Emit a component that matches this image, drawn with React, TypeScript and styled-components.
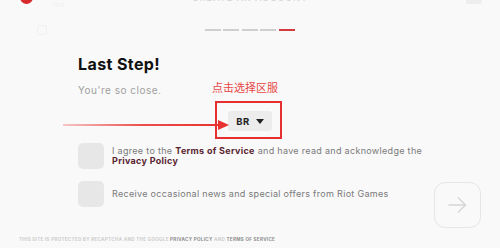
import React from 'react'
import styled, { createGlobalStyle } from 'styled-components'

const GlobalStyle = createGlobalStyle`
  html, body {
    margin: 0;
    padding: 0;
    background: #f9f9f9;
  }
  body {
    font-family: Inter, "Noto Sans", sans-serif;
  }
`

const STEPS = 5
const CURRENT_STEP = 4

export default function App() {
  return (
    <>
      <GlobalStyle />
      <Page>
        <Header>
          <Brand>
            <Logo />
            <BrandMeta>
              <FaintText>riot</FaintText>
              <FaintIcon />
            </BrandMeta>
          </Brand>
          <StepInfo>
            <StepTitle>CREATE AN ACCOUNT</StepTitle>
            <Progress>
              {Array.from({ length: STEPS }).map((_, i) => (
                <Dash key={i} active={i === CURRENT_STEP} />
              ))}
            </Progress>
          </StepInfo>
          <HeaderRight>
            <CloseStub />
          </HeaderRight>
        </Header>

        <Body>
          <Form>
            <Title>Last Step!</Title>
            <Subtitle>You're so close.</Subtitle>

            <RegionRow>
              <RegionSelect>
                <RegionLabel>BR</RegionLabel>
                <Caret />
                <AnnotationLabel>点击选择区服</AnnotationLabel>
                <AnnotationBox />
                <AnnotationArrow viewBox="0 0 166 12" preserveAspectRatio="none">
                  <defs>
                    <linearGradient id="arrowFade" x1="0" x2="1" y1="0" y2="0">
                      <stop offset="0" stopColor="#e8322f" stopOpacity="0.25" />
                      <stop offset="0.5" stopColor="#e8322f" stopOpacity="0.85" />
                      <stop offset="1" stopColor="#e8322f" stopOpacity="1" />
                    </linearGradient>
                  </defs>
                  <rect x="0" y="5" width="156" height="2" fill="url(#arrowFade)" />
                  <polygon points="155,1 166,6 155,11" fill="#e8322f" />
                </AnnotationArrow>
              </RegionSelect>
            </RegionRow>

            <CheckRow>
              <Checkbox />
              <CheckText>
                I agree to the <LinkText>Terms of Service</LinkText> and have read and acknowledge the
                <br />
                <LinkText>Privacy Policy</LinkText>
              </CheckText>
            </CheckRow>

            <CheckRow>
              <Checkbox />
              <CheckText>Receive occasional news and special offers from Riot Games</CheckText>
            </CheckRow>
          </Form>

          <Actions>
            <NextButton aria-label="Next">
              <svg width="19" height="16" viewBox="0 0 19 16" fill="none">
                <path d="M1 8h16.5" stroke="#d6d6d6" strokeWidth="1.5" strokeLinecap="round" />
                <path d="M10.5 1l7 7-7 7" stroke="#d6d6d6" strokeWidth="1.5" strokeLinecap="round" strokeLinejoin="round" />
              </svg>
            </NextButton>
          </Actions>
        </Body>

        <Footer>
          THIS SITE IS PROTECTED BY RECAPTCHA AND THE GOOGLE <FooterLink>PRIVACY POLICY</FooterLink> AND{' '}
          <FooterLink>TERMS OF SERVICE</FooterLink>
        </Footer>
      </Page>
    </>
  )
}

const Page = styled.div`
  width: 500px;
  height: 248px;
  overflow: hidden;
  background: #f9f9f9;
  display: flex;
  flex-direction: column;
`

const Header = styled.div`
  height: 44px;
  display: grid;
  grid-template-columns: 1fr auto 1fr;
`

const Brand = styled.div`
  display: flex;
  align-items: flex-start;
  padding-left: 20px;
`

const Logo = styled.div`
  width: 13px;
  height: 13px;
  margin-top: -9px;
  border-radius: 50%;
  background: #d8292b;
`

const BrandMeta = styled.div`
  display: flex;
  flex-direction: column;
  margin-left: 4px;
`

const FaintText = styled.span`
  margin-left: 16px;
  margin-top: 1px;
  font-size: 7px;
  line-height: 8px;
  color: #efefef;
`

const FaintIcon = styled.div`
  width: 8px;
  height: 8px;
  margin-top: 16px;
  border: 1px solid #f0f0f0;
  border-radius: 2px;
`

const StepInfo = styled.div`
  display: flex;
  flex-direction: column;
  align-items: center;
`

const StepTitle = styled.div`
  margin-top: -7.5px;
  font-size: 9px;
  line-height: 9px;
  letter-spacing: 1px;
  font-weight: 600;
  color: #d8d8d8;
  white-space: nowrap;
`

const Progress = styled.div`
  display: flex;
  gap: 2.5px;
  margin-top: 27.5px;
`

const Dash = styled.div<{ active: boolean }>`
  width: 16px;
  height: 2px;
  background: ${p => (p.active ? '#d33a3c' : '#cfcfcf')};
`

const HeaderRight = styled.div`
  display: flex;
  justify-content: flex-end;
  padding-right: 18px;
`

const CloseStub = styled.div`
  width: 16px;
  height: 4px;
  background: #eeeeee;
  border-radius: 0 0 2px 2px;
`

const Body = styled.div`
  height: 184px;
  display: flex;
  justify-content: space-between;
`

const Form = styled.div`
  display: flex;
  flex-direction: column;
  padding-left: 78px;
`

const Title = styled.h1`
  margin: 10px 0 0;
  font-size: 16px;
  line-height: 20px;
  font-weight: 700;
  letter-spacing: 0.4px;
  color: #111111;
`

const Subtitle = styled.p`
  margin: 9px 0 0;
  font-size: 10px;
  line-height: 14px;
  letter-spacing: 0.5px;
  color: #a0a0a0;
`

const RegionRow = styled.div`
  display: flex;
  padding-left: 150px;
  margin-top: 14px;
`

const RegionSelect = styled.div`
  position: relative;
  width: 44px;
  height: 20px;
  display: flex;
  align-items: center;
  justify-content: center;
  gap: 6px;
  background: #ececec;
  border-radius: 3px;
`

const RegionLabel = styled.span`
  font-size: 9.5px;
  font-weight: 700;
  color: #222222;
  letter-spacing: 0.4px;
`

const Caret = styled.span`
  width: 0;
  height: 0;
  border-left: 4.5px solid transparent;
  border-right: 4.5px solid transparent;
  border-top: 5px solid #222222;
`

const AnnotationLabel = styled.span`
  position: absolute;
  left: -16px;
  top: -30px;
  font-family: "Noto Sans CJK SC", sans-serif;
  font-size: 11px;
  line-height: 13px;
  color: #e64745;
  white-space: nowrap;
`

const AnnotationBox = styled.div`
  position: absolute;
  left: -13px;
  top: -10px;
  width: 67px;
  height: 38px;
  box-sizing: border-box;
  border: 2px solid #e5302f;
`

const AnnotationArrow = styled.svg`
  position: absolute;
  left: -165px;
  top: 8px;
  width: 166px;
  height: 12px;
`

const CheckRow = styled.div`
  display: flex;
  align-items: center;
  margin-top: 12px;
`

const Checkbox = styled.div`
  flex: none;
  width: 26px;
  height: 26px;
  border-radius: 5px;
  background: #e7e7e7;
`

const CheckText = styled.div`
  margin-left: 8px;
  font-size: 9px;
  line-height: 10.5px;
  letter-spacing: 0.31px;
  color: #7a7a7a;
  white-space: nowrap;
`

const LinkText = styled.span`
  font-weight: 700;
  color: #5a2531;
`

const Actions = styled.div`
  display: flex;
  align-items: flex-end;
  padding-right: 19px;
`

const NextButton = styled.button`
  width: 47px;
  height: 46px;
  padding: 0;
  display: flex;
  align-items: center;
  justify-content: center;
  background: transparent;
  border: 1.5px solid #e6e6e6;
  border-radius: 11px;
  cursor: pointer;
`

const Footer = styled.div`
  margin-top: 9px;
  padding-left: 19px;
  font-size: 4.6px;
  line-height: 6px;
  font-weight: 700;
  letter-spacing: 0.28px;
  color: #cdcdcd;
  white-space: nowrap;
`

const FooterLink = styled.span`
  color: #8e8e8e;
`
